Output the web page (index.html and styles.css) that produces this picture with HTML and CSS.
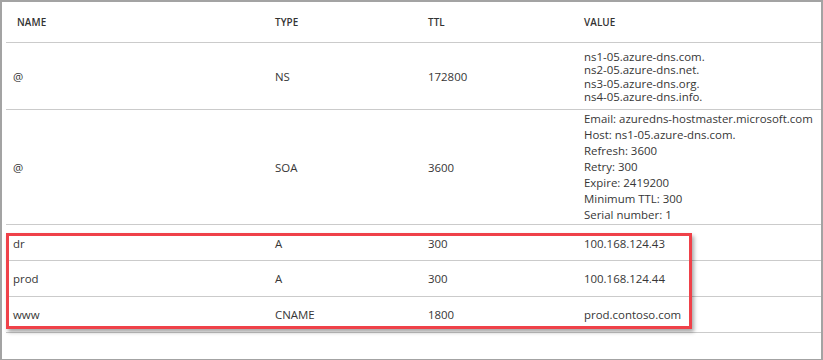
FILE: index.html
```
<!DOCTYPE html>
<html lang="en">
<head>
<meta charset="utf-8">
<title>DNS records</title>
<link rel="stylesheet" href="styles.css">
</head>
<body>
<div class="frame">
  <div class="grid">
    <div class="row head">
      <div class="cell first">NAME</div>
      <div class="cell">TYPE</div>
      <div class="cell">TTL</div>
      <div class="cell">VALUE</div>
    </div>
    <div class="row ns">
      <div class="cell">@</div>
      <div class="cell">NS</div>
      <div class="cell">172800</div>
      <div class="cell lines">ns1-05.azure-dns.com.<br>ns2-05.azure-dns.net.<br>ns3-05.azure-dns.org.<br>ns4-05.azure-dns.info.</div>
    </div>
    <div class="row soa">
      <div class="cell">@</div>
      <div class="cell">SOA</div>
      <div class="cell">3600</div>
      <div class="cell lines">Email: azuredns-hostmaster.microsoft.com<br>Host: ns1-05.azure-dns.com.<br>Refresh: 3600<br>Retry: 300<br>Expire: 2419200<br>Minimum TTL: 300<br>Serial number: 1</div>
    </div>
    <div class="row small">
      <div class="cell">dr</div>
      <div class="cell">A</div>
      <div class="cell">300</div>
      <div class="cell">100.168.124.43</div>
    </div>
    <div class="row small">
      <div class="cell">prod</div>
      <div class="cell">A</div>
      <div class="cell">300</div>
      <div class="cell">100.168.124.44</div>
    </div>
    <div class="row small">
      <div class="cell">www</div>
      <div class="cell">CNAME</div>
      <div class="cell">1800</div>
      <div class="cell">prod.contoso.com</div>
    </div>
  </div>
  <div class="highlight"></div>
</div>
</body>
</html>
```
FILE: styles.css
```
html, body {
  margin: 0;
  padding: 0;
  background: #ffffff;
}
.frame {
  position: relative;
  width: 823px;
  height: 360px;
  box-sizing: border-box;
  border: 2px solid #a3a3a3;
  border-bottom-width: 1px;
  padding-left: 4px;
  font-family: "Open Sans", "Noto Sans", sans-serif;
  font-size: 11.45px;
  color: #363636;
}
.row {
  display: grid;
  grid-template-columns: 262px 153px 156px 1fr;
  align-items: center;
  border-bottom: 1px solid #cbcbcb;
}
.cell {
  padding-left: 7px;
  white-space: nowrap;
}
.head {
  height: 40px;
  font-size: 9.9px;
  font-weight: 600;
  color: #333;
  letter-spacing: 0.1px;
}
.head .first {
  padding-left: 11px;
}
.ns {
  height: 66px;
}
.ns .lines {
  line-height: 13.4px;
  padding-top: 1px;
}
.soa {
  height: 114px;
}
.soa .lines {
  line-height: 16px;
}
.small {
  height: 35px;
}
.small:nth-child(4) .cell {
  padding-top: 2px;
}
.highlight {
  position: absolute;
  left: 4px;
  top: 231px;
  width: 680px;
  height: 90px;
  border: 3px solid #ef4149;
  box-shadow: 2px 3px 4px rgba(0, 0, 0, 0.35);
}
```
